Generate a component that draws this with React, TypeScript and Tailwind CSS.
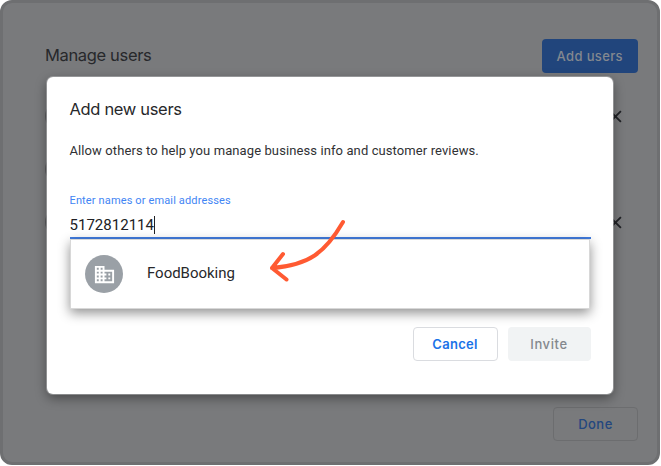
import React from "react";

const ui = "font-['Inter','Liberation_Sans',sans-serif]";

function CloseIcon() {
  return (
    <svg className="size-[13px]" viewBox="0 0 14 14" fill="none" stroke="#202226" strokeWidth="2">
      <path d="M1.2 1.2 12.8 12.8M12.8 1.2 1.2 12.8" />
    </svg>
  );
}

function UserRow({ removable }: { removable: boolean }) {
  return (
    <div className="flex h-[30px] items-center justify-between pr-4">
      <span className="size-[30px] rounded-full bg-[#5c5d5f]" />
      {removable && <CloseIcon />}
    </div>
  );
}

function ManageUsers() {
  return (
    <div className="flex h-[465px] w-[660px] flex-col rounded-[12px] border-[3px] border-[#6e6f71] bg-[#797a7c] pr-[19px] pl-[42px]">
      <header className="mt-9 flex h-[34px] items-center justify-between">
        <h1 className={`${ui} -mt-0.5 text-[16.5px] leading-5 tracking-[-0.35px] text-[#27282b]`}>Manage users</h1>
        <button className={`${ui} h-[34px] w-[96.5px] rounded-[4px] bg-[#21457c] pt-0.5 text-[13px] font-medium tracking-[0.35px] text-[#84888f]`}>
          Add users
        </button>
      </header>
      <div className="mt-7 flex flex-col gap-[23px]">
        <UserRow removable />
        <UserRow removable={false} />
        <UserRow removable />
      </div>
      <button className={`${ui} mt-auto mb-[21px] h-[34px] w-[85px] self-end rounded-[4px] border border-[#6c6d6f] pt-0.5 text-[13px] font-medium tracking-[0.5px] text-[#23477f]`}>
        Done
      </button>
    </div>
  );
}

function BuildingIcon() {
  return (
    <svg className="size-[23px]" viewBox="0 0 24 24" fill="white">
      <path d="M12 7V3H2v18h20V7H12zM6 19H4v-2h2v2zm0-4H4v-2h2v2zm0-4H4V9h2v2zm0-4H4V5h2v2zm4 12H8v-2h2v2zm0-4H8v-2h2v2zm0-4H8V9h2v2zm0-4H8V5h2v2zm10 12h-8v-2h2v-2h-2v-2h2v-2h-2V9h8v10zm-2-8h-2v2h2v-2zm0 4h-2v2h2v-2z" />
    </svg>
  );
}

function AddUsersDialog() {
  return (
    <section className="absolute top-[77px] left-[47px] flex h-[317px] w-[566px] flex-col rounded-[6px] bg-white pr-[22.5px] pl-[22.5px] shadow-[0_0_0_1px_rgba(175,177,179,0.6),0_4px_12px_rgba(0,0,0,0.42)]">
      <h2 className={`${ui} mt-[22px] text-[16.5px] leading-5 tracking-[-0.33px] text-[#27282b]`}>Add new users</h2>
      <p className="mt-[24px] text-[13px] leading-4 tracking-[0.1px] text-[#303134]">
        Allow others to help you manage business info and customer reviews.
      </p>
      <label className="mt-[34px] text-[11px] leading-4 tracking-[0.14px] text-[#4285f4]">
        Enter names or email addresses
      </label>
      <div className="relative mt-[5px] flex h-[25px] w-[521px] items-center border-b-2 border-[#427de0] pb-0.5">
        <span className="text-[15px] leading-5 tracking-[0.02px] text-[#202124]">5172812114</span>
        <span className="h-[18px] w-px bg-[#202124]" />
        <div className="absolute top-[25px] left-0 flex h-[70px] w-[520px] items-center border border-[#d8d8d8] bg-white pl-[14.5px] shadow-[0_4px_11px_rgba(0,0,0,0.44)]">
          <span className="flex size-[38px] items-center justify-center rounded-full bg-[#9aa0a6]">
            <BuildingIcon />
          </span>
          <span className="mb-0.5 ml-6 text-[15px] tracking-[-0.03px] text-[#27282b]">FoodBooking</span>
        </div>
      </div>
      <div className="mt-auto mb-[33px] flex justify-end gap-[10px]">
        <button className={`${ui} h-[34px] w-[85px] rounded-[4px] border border-[#dadce0] pt-0.5 text-[13px] font-semibold tracking-[0.3px] text-[#1a73e8]`}>
          Cancel
        </button>
        <button className={`${ui} h-[34px] w-[83px] rounded-[4px] bg-[#f1f3f4] pt-0.5 text-[13px] font-medium tracking-[0.6px] text-[#84888d]`}>
          Invite
        </button>
      </div>
    </section>
  );
}

export default function App() {
  return (
    <main className="relative h-[466px] w-[661px] overflow-hidden bg-white font-['Roboto','Liberation_Sans',sans-serif]">
      <ManageUsers />
      <AddUsersDialog />
      <svg className="absolute top-[216px] left-[265px] h-[70px] w-[85px]" viewBox="265 216 85 70" fill="none" stroke="#ff5a32" strokeWidth="4" strokeLinecap="round" strokeLinejoin="round">
        <path d="M343 222C325 253 309 265 272 268M283 254 272 268 286.500 279.500" />
      </svg>
    </main>
  );
}
